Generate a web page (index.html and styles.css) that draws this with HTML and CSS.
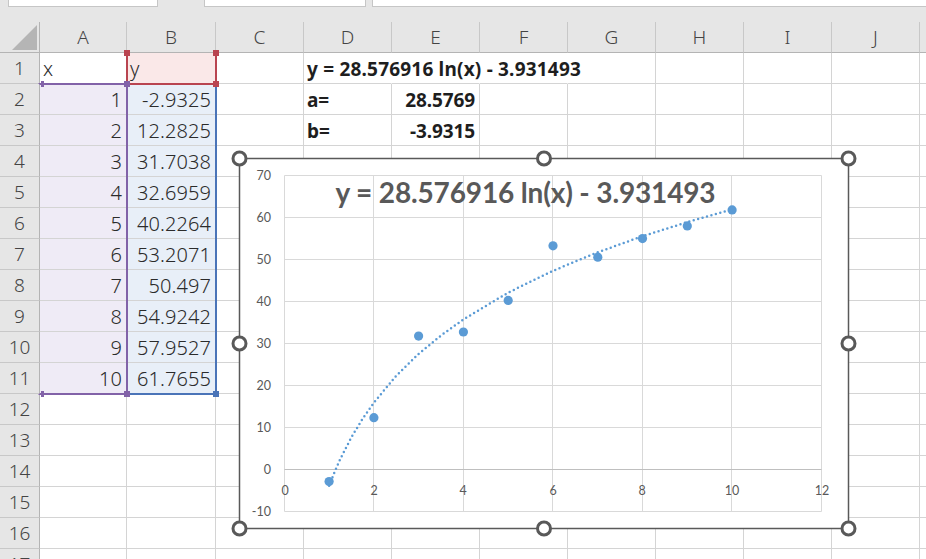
FILE: index.html
```html
<!DOCTYPE html>
<html lang="ja">
<head>
<meta charset="utf-8">
<title>Sheet</title>
<link rel="stylesheet" href="styles.css">
</head>
<body>
<div class="toolbar">
  <div class="box namebox"></div>
  <div class="box fxbox"></div>
  <div class="box formula"></div>
</div>
<div class="sheet">
  <div class="grid">
    <div class="corner"><span class="tri"></span></div>
    <div class="ch">A</div><div class="ch">B</div><div class="ch">C</div><div class="ch">D</div><div class="ch">E</div><div class="ch">F</div><div class="ch">G</div><div class="ch">H</div><div class="ch">I</div><div class="ch">J</div><div class="ch"></div>

    <div class="rh">1</div><div class="c">x</div><div class="c pk">y</div><div class="c"></div><div class="c b wide nr">y = 28.576916 ln(x) - 3.931493</div><div class="c nr"></div><div class="c nr"></div><div class="c"></div><div class="c"></div><div class="c"></div><div class="c"></div><div class="c"></div>

    <div class="rh">2</div><div class="c r pu">1</div><div class="c r bl">-2.9325</div><div class="c"></div><div class="c b">a=</div><div class="c b r">28.5769</div><div class="c"></div><div class="c"></div><div class="c"></div><div class="c"></div><div class="c"></div><div class="c"></div>

    <div class="rh">3</div><div class="c r pu">2</div><div class="c r bl">12.2825</div><div class="c"></div><div class="c b">b=</div><div class="c b r">-3.9315</div><div class="c"></div><div class="c"></div><div class="c"></div><div class="c"></div><div class="c"></div><div class="c"></div>

    <div class="rh">4</div><div class="c r pu">3</div><div class="c r bl">31.7038</div><div class="c"></div><div class="c"></div><div class="c"></div><div class="c"></div><div class="c"></div><div class="c"></div><div class="c"></div><div class="c"></div><div class="c"></div>

    <div class="rh">5</div><div class="c r pu">4</div><div class="c r bl">32.6959</div><div class="c"></div><div class="c"></div><div class="c"></div><div class="c"></div><div class="c"></div><div class="c"></div><div class="c"></div><div class="c"></div><div class="c"></div>

    <div class="rh">6</div><div class="c r pu">5</div><div class="c r bl">40.2264</div><div class="c"></div><div class="c"></div><div class="c"></div><div class="c"></div><div class="c"></div><div class="c"></div><div class="c"></div><div class="c"></div><div class="c"></div>

    <div class="rh">7</div><div class="c r pu">6</div><div class="c r bl">53.2071</div><div class="c"></div><div class="c"></div><div class="c"></div><div class="c"></div><div class="c"></div><div class="c"></div><div class="c"></div><div class="c"></div><div class="c"></div>

    <div class="rh">8</div><div class="c r pu">7</div><div class="c r bl">50.497</div><div class="c"></div><div class="c"></div><div class="c"></div><div class="c"></div><div class="c"></div><div class="c"></div><div class="c"></div><div class="c"></div><div class="c"></div>

    <div class="rh">9</div><div class="c r pu">8</div><div class="c r bl">54.9242</div><div class="c"></div><div class="c"></div><div class="c"></div><div class="c"></div><div class="c"></div><div class="c"></div><div class="c"></div><div class="c"></div><div class="c"></div>

    <div class="rh">10</div><div class="c r pu">9</div><div class="c r bl">57.9527</div><div class="c"></div><div class="c"></div><div class="c"></div><div class="c"></div><div class="c"></div><div class="c"></div><div class="c"></div><div class="c"></div><div class="c"></div>

    <div class="rh">11</div><div class="c r pu">10</div><div class="c r bl">61.7655</div><div class="c"></div><div class="c"></div><div class="c"></div><div class="c"></div><div class="c"></div><div class="c"></div><div class="c"></div><div class="c"></div><div class="c"></div>

    <div class="rh">12</div><div class="c"></div><div class="c"></div><div class="c"></div><div class="c"></div><div class="c"></div><div class="c"></div><div class="c"></div><div class="c"></div><div class="c"></div><div class="c"></div><div class="c"></div>

    <div class="rh">13</div><div class="c"></div><div class="c"></div><div class="c"></div><div class="c"></div><div class="c"></div><div class="c"></div><div class="c"></div><div class="c"></div><div class="c"></div><div class="c"></div><div class="c"></div>

    <div class="rh">14</div><div class="c"></div><div class="c"></div><div class="c"></div><div class="c"></div><div class="c"></div><div class="c"></div><div class="c"></div><div class="c"></div><div class="c"></div><div class="c"></div><div class="c"></div>

    <div class="rh">15</div><div class="c"></div><div class="c"></div><div class="c"></div><div class="c"></div><div class="c"></div><div class="c"></div><div class="c"></div><div class="c"></div><div class="c"></div><div class="c"></div><div class="c"></div>

    <div class="rh">16</div><div class="c"></div><div class="c"></div><div class="c"></div><div class="c"></div><div class="c"></div><div class="c"></div><div class="c"></div><div class="c"></div><div class="c"></div><div class="c"></div><div class="c"></div>

    <div class="rh">17</div><div class="c"></div><div class="c"></div><div class="c"></div><div class="c"></div><div class="c"></div><div class="c"></div><div class="c"></div><div class="c"></div><div class="c"></div><div class="c"></div><div class="c"></div>
  </div>

  <div class="hl hl-blue"><span class="sq br"></span></div>
  <div class="hl hl-red"><span class="sq tl"></span><span class="sq tr"></span><span class="sq br"></span></div>
  <div class="hl hl-purple"><span class="sq tl half"></span><span class="sq tr"></span><span class="sq bl half"></span><span class="sq br"></span></div>

  <svg class="chart" width="634" height="396" viewBox="228 146 634 396" xmlns="http://www.w3.org/2000/svg">
    <rect x="239.5" y="158.5" width="609" height="370" fill="#fff" stroke="#595959" stroke-width="1.5"/>
    <g stroke="#d9d9d9" stroke-width="1" fill="none">
      <path d="M284.5 175.5H821.5M284.5 217.5H821.5M284.5 259.5H821.5M284.5 301.5H821.5M284.5 343.5H821.5M284.5 385.5H821.5M284.5 427.5H821.5M284.5 511.5H821.5"/>
      <path d="M284.5 175.5V511.5M373.5 175.5V511.5M463.5 175.5V511.5M552.5 175.5V511.5M642.5 175.5V511.5M731.5 175.5V511.5M821.5 175.5V511.5"/>
    </g>
    <path d="M284.5 469.5H821.5" stroke="#bfbfbf" stroke-width="1"/>
    <g class="ax" text-anchor="end">
      <text x="271" y="180">70</text>
      <text x="271" y="222">60</text>
      <text x="271" y="264">50</text>
      <text x="271" y="306">40</text>
      <text x="271" y="348">30</text>
      <text x="271" y="390">20</text>
      <text x="271" y="432">10</text>
      <text x="271" y="474">0</text>
      <text x="271" y="516">-10</text>
    </g>
    <g class="ax" text-anchor="middle">
      <text x="285" y="494.5">0</text>
      <text x="374" y="494.5">2</text>
      <text x="463" y="494.5">4</text>
      <text x="553" y="494.5">6</text>
      <text x="642" y="494.5">8</text>
      <text x="732" y="494.5">10</text>
      <text x="822" y="494.5">12</text>
    </g>
    <text class="title" x="525.5" y="203" text-anchor="middle">y = 28.576916 ln(x) - 3.931493</text>
    <path d="M329.1 485.8L334.7 471.7L340.3 459.0L351.5 437.1L362.7 418.6L373.9 402.6L396.2 375.8L418.6 353.9L441.0 335.5L463.4 319.4L508.2 292.6L553.0 270.8L597.8 252.3L642.5 236.2L687.3 222.1L732.1 209.5" fill="none" stroke="#5b9bd5" stroke-width="2.5" stroke-linecap="round" stroke-linejoin="round" stroke-dasharray="0 4.6"/>
    <g fill="#5b9bd5">
      <circle cx="329.1" cy="481.6" r="4.6"/>
      <circle cx="373.9" cy="417.7" r="4.6"/>
      <circle cx="418.6" cy="336.1" r="4.6"/>
      <circle cx="463.4" cy="332.0" r="4.6"/>
      <circle cx="508.2" cy="300.4" r="4.6"/>
      <circle cx="553.0" cy="245.8" r="4.6"/>
      <circle cx="597.8" cy="257.2" r="4.6"/>
      <circle cx="642.5" cy="238.6" r="4.6"/>
      <circle cx="687.3" cy="225.9" r="4.6"/>
      <circle cx="732.1" cy="209.9" r="4.6"/>
    </g>
    <g fill="#fff" stroke="#595959" stroke-width="3">
      <circle cx="239.5" cy="158.5" r="6.5"/>
      <circle cx="544" cy="158.5" r="6.5"/>
      <circle cx="848.5" cy="158.5" r="6.5"/>
      <circle cx="239.5" cy="343.5" r="6.5"/>
      <circle cx="848.5" cy="343.5" r="6.5"/>
      <circle cx="239.5" cy="528.5" r="6.5"/>
      <circle cx="544" cy="528.5" r="6.5"/>
      <circle cx="848.5" cy="528.5" r="6.5"/>
    </g>
  </svg>
</div>
</body>
</html>
```

FILE: styles.css
```css
* {
  box-sizing: border-box;
  margin: 0;
  padding: 0;
}

html, body {
  width: 926px;
  height: 559px;
  overflow: hidden;
}

body {
  background: #e6e6e6;
  font-family: "Noto Sans", "Noto Sans CJK JP", sans-serif;
  color: #2b2b2b;
}

.toolbar {
  height: 22px;
  display: flex;
  align-items: flex-start;
}

.box {
  height: 7px;
  background: #fff;
  border: 1px solid #c6c6c6;
  border-top: none;
}

.namebox {
  margin-left: 8px;
  width: 150px;
}

.fxbox {
  margin-left: 46px;
  width: 162px;
}

.formula {
  margin-left: 6px;
  flex: 1;
  border-right: none;
}

.sheet {
  position: relative;
  height: 537px;
  overflow: hidden;
  background: #fff;
}

.grid {
  display: grid;
  grid-template-columns: 40px 87px 89px repeat(8, 88px) 1fr;
  grid-auto-rows: 31px;
}

.corner {
  background: #e6e6e6;
  border-right: 1px solid #b4b4b4;
  border-bottom: 1px solid #b4b4b4;
  display: flex;
  justify-content: flex-end;
  align-items: flex-end;
  padding: 0 2px 2px 0;
}

.tri {
  width: 25px;
  height: 25px;
  background: #b5b5b5;
  clip-path: polygon(100% 0, 100% 100%, 0 100%);
}

.ch {
  background: #e6e6e6;
  border-right: 1px solid #c8c8c8;
  border-bottom: 1px solid #b4b4b4;
  text-align: center;
  font-size: 19px;
  font-weight: 300;
  line-height: 30px;
  color: #444;
}

.rh {
  background: #e6e6e6;
  border-right: 1px solid #b4b4b4;
  border-bottom: 1px solid #c8c8c8;
  text-align: center;
  font-size: 19px;
  font-weight: 300;
  line-height: 31px;
  color: #444;
}

.c {
  border-right: 1px solid #d4d4d4;
  border-bottom: 1px solid #d4d4d4;
  font-size: 20px;
  font-weight: 300;
  letter-spacing: 0.1px;
  line-height: 30px;
  padding: 1px 4px 0 3px;
  white-space: nowrap;
  overflow: visible;
}

.c.r {
  text-align: right;
}

.c.b {
  font-weight: 700;
  font-size: 19px;
  letter-spacing: -0.1px;
  color: #1e1e1e;
}

.c.b.wide {
  letter-spacing: 0.2px;
}

.c.nr {
  border-right-color: transparent;
}

.pu {
  background: #efebf6;
}

.pk {
  background: #fae8e8;
}

.bl {
  background: #e8eff8;
}

/* reference highlight borders */
.hl {
  position: absolute;
  border-style: solid;
  border-width: 2px;
}

.hl-blue {
  left: 126px;
  top: 61px;
  width: 91px;
  height: 312px;
  border-color: #4a74b8;
  color: #4a74b8;
}

.hl-red {
  left: 126px;
  top: 30px;
  width: 91px;
  height: 33px;
  border-color: #b94450;
  border-top-color: transparent;
  color: #b94450;
}

.hl-purple {
  left: 38px;
  top: 61px;
  width: 90px;
  height: 312px;
  border-color: #8262a8;
  border-left-color: transparent;
  color: #8262a8;
}

.sq {
  position: absolute;
  width: 6px;
  height: 6px;
  background: currentColor;
}

.sq.tl { left: -4px; top: -4px; }
.sq.tr { right: -4px; top: -4px; }
.sq.bl { left: -4px; bottom: -4px; }
.sq.br { right: -4px; bottom: -4px; }
.sq.half { width: 3px; left: 1px; }

.chart {
  position: absolute;
  left: 228px;
  top: 124px;
  overflow: visible;
}

.ax {
  font-family: Lato, "Liberation Sans", sans-serif;
  font-size: 12.5px;
  fill: #595959;
}

.title {
  font-family: Lato, "Liberation Sans", sans-serif;
  font-weight: 700;
  font-size: 28px;
  letter-spacing: -0.15px;
  fill: #595959;
}
```
